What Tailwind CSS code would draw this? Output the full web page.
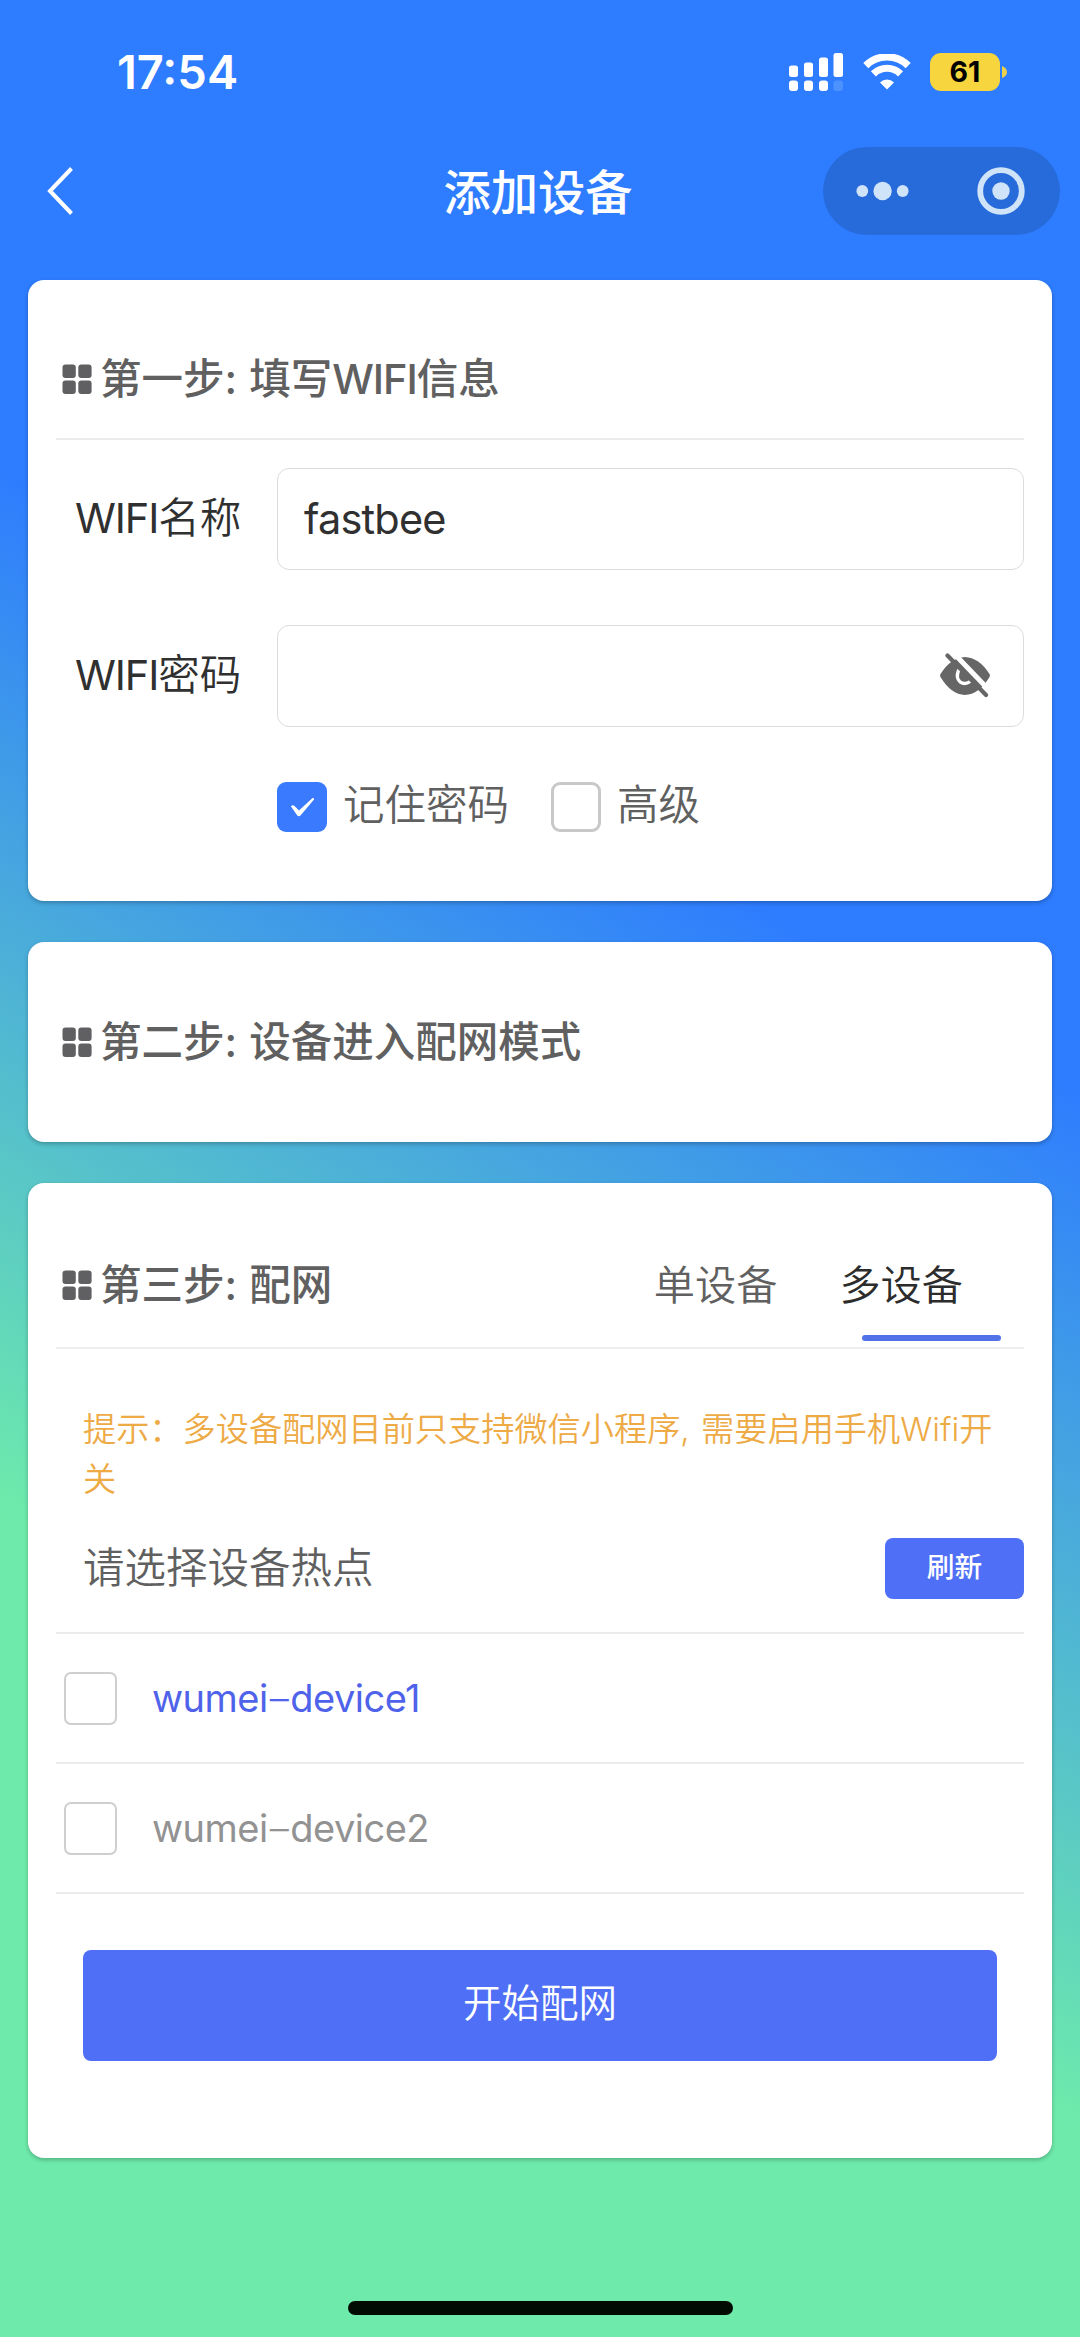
<!DOCTYPE html>
<html lang="zh-CN">
<head>
<meta charset="utf-8">
<meta name="viewport" content="width=1080">
<title>添加设备</title>
<script src="https://cdn.jsdelivr.net/npm/@tailwindcss/browser@4"></script>
</head>
<body class="font-['Inter','Noto_Sans_CJK_SC',sans-serif]">
<div class="flex h-[2337px] w-[1080px] flex-col overflow-hidden bg-[linear-gradient(210deg,#2e7cff_36.8%,#6eebab_72%)] text-[41.5px] text-[#606060]">

  <!-- Status bar -->
  <header class="flex h-[144px] shrink-0 items-center justify-between pr-[73px] pl-[117px] text-white">
    <div class="text-[47px] leading-[60px] font-semibold">17:54</div>
    <div class="flex items-center">
      <svg class="h-[38px] w-[56px]" viewBox="0 0 56 38" fill="#fff">
        <rect x="1" y="12.500" width="9" height="11.500" rx="2.500"/><rect x="16" y="9.500" width="9" height="14.500" rx="2.500"/><rect x="31" y="4.500" width="9" height="19.500" rx="2.500"/><rect x="45.500" y="0" width="9.500" height="24" rx="2.500"/>
        <rect x="1" y="27.500" width="9" height="10.500" rx="3"/><rect x="16" y="27.500" width="9" height="10.500" rx="3"/><rect x="31" y="27.500" width="9" height="10.500" rx="3"/><rect x="45.500" y="27.500" width="9.500" height="10.500" rx="3" fill="#4c92ff"/>
      </svg>
      <svg class="ml-[19px] h-[36px] w-[48px]" viewBox="0 0 48 36" fill="none" stroke="#fff" stroke-width="7.200">
        <path d="M2.800 11.600 A30 30 0 0 1 45.200 11.600"/>
        <path d="M10.400 19.800 A19.500 19.500 0 0 1 37.600 19.800"/>
        <path d="M24 35.500 L17 28.400 A10 10 0 0 1 31 28.400 Z" fill="#fff" stroke="none"/>
      </svg>
      <div class="ml-[19px] flex h-[38px] w-[70px] items-center justify-center rounded-[11px] bg-[#f7d53e] text-[28.5px] leading-[38px] font-bold text-black">61</div>
      <svg class="ml-[2px] h-[12px] w-[5px]" viewBox="0 0 5 12"><path d="M0 0 Q5 2 5 6 Q5 10 0 12Z" fill="#e9d04f"/></svg>
    </div>
  </header>

  <!-- Navigation bar -->
  <nav class="grid h-[94px] shrink-0 grid-cols-[1fr_auto_1fr] items-center px-5">
    <svg class="ml-[26px] h-[50px] w-[30px]" viewBox="0 0 30 50" fill="none" stroke="#fff" stroke-width="4"><path d="M25.500 2.500 L4 25 L25.500 47.500"/></svg>
    <h1 class="-translate-x-[2px] pt-[4px] text-[47.3px] leading-[60px] font-medium text-white">添加设备</h1>
    <div class="flex h-[88px] w-[237px] items-center justify-between justify-self-end rounded-full bg-[#276bdb] pr-[35px] pl-[33px]">
      <svg class="h-[20px] w-[53px]" viewBox="0 0 53 20" fill="#cfe3f9"><circle cx="6.300" cy="10" r="5.900"/><circle cx="26.600" cy="10" r="9.200"/><circle cx="46.700" cy="10" r="5.900"/></svg>
      <svg class="h-[48px] w-[48px]" viewBox="0 0 48 48"><circle cx="24" cy="24" r="20.800" fill="none" stroke="#cfe3f9" stroke-width="5.800"/><circle cx="24" cy="24" r="8.700" fill="#cfe3f9"/></svg>
    </div>
  </nav>

  <main class="mt-[42px] flex flex-col gap-[41px] px-[28px]">

    <!-- Step 1 -->
    <section class="h-[621px] rounded-[16px] bg-white px-[28px] shadow-[0_2px_4px_rgba(0,0,0,0.25)]">
      <div class="flex h-[160px] items-center border-b-2 border-[#ebebeb] pt-[40px] pl-[6px]">
        <svg class="h-[30px] w-[30px]" viewBox="0 0 30 30" fill="#606063"><rect x="0.500" y="0.500" width="13.300" height="13.500" rx="3"/><rect x="16.300" y="0.500" width="13.300" height="13.500" rx="3"/><rect x="0.500" y="16.500" width="13.300" height="13.500" rx="3"/><rect x="16.300" y="16.500" width="13.300" height="13.500" rx="3"/></svg>
        <h2 class="ml-[8px] leading-[60px] font-medium whitespace-pre [word-spacing:1px]">第一步: 填写<span class="tracking-[-1px]">WIFI</span>信息</h2>
      </div>
      <div class="mt-[28px] flex h-[102px] items-center">
        <label class="w-[221px] pb-[2px] pl-[19px] leading-[60px] font-[350] text-[#303030]"><span class="font-normal tracking-[-1.1px]">WIFI</span>名称</label>
        <div class="flex h-full flex-1 items-center rounded-[12px] border border-[#dcdcdc] pl-[26px] leading-[60px] tracking-[-0.8px] text-[#303030]">fastbee</div>
      </div>
      <div class="mt-[55px] flex h-[102px] items-center">
        <label class="w-[221px] pb-[2px] pl-[19px] leading-[60px] font-[350] text-[#303030]"><span class="font-normal tracking-[-1.1px]">WIFI</span>密码</label>
        <div class="flex h-full flex-1 items-center justify-end rounded-[12px] border border-[#dcdcdc] pr-[31px]">
          <svg class="h-[46px] w-[54px]" viewBox="0 0 54 46">
            <path d="M2.500 24 Q1.500 22.500 2.500 21 Q13 4.500 27 4 Q41 4.500 51.500 21 Q52.500 22.500 51.500 24 Q41 41.500 27 42 Q13 41.500 2.500 24Z" fill="#666"/>
            <path d="M20.500 17.500 Q17.500 25 22 28.800 Q27 32.300 32 28.500" fill="none" stroke="#fff" stroke-width="3.400" stroke-linecap="round"/>
            <path d="M14 -1.500 L53 39" stroke="#fff" stroke-width="5"/>
            <path d="M9.500 2.500 L48 42" stroke="#666" stroke-width="4.200" stroke-linecap="round"/>
          </svg>
        </div>
      </div>
      <div class="mt-[55px] flex h-[50px] items-center pl-[221px] font-[350]">
        <span class="flex size-[50px] items-center justify-center rounded-[9px] bg-[#3a7afe]">
          <svg class="h-[20px] w-[25px]" viewBox="0 0 25 20" fill="#fff"><path d="M1 9.500 Q2.500 7.500 4.500 9 L9 13.500 L22.500 1 Q24.500 0.500 24 2.500 L10.500 18.500 Q8.700 20 7.300 18.500Z"/></svg>
        </span>
        <span class="ml-[16px] -translate-y-[2px] leading-[50px]">记住密码</span>
        <span class="ml-[42px] size-[50px] rounded-[9px] border-3 border-[#c8c8c8]"></span>
        <span class="ml-[16px] -translate-y-[2px] leading-[50px]">高级</span>
      </div>
    </section>

    <!-- Step 2 -->
    <section class="flex h-[200px] items-center rounded-[16px] bg-white px-[34px] shadow-[0_2px_4px_rgba(0,0,0,0.25)]">
      <svg class="h-[30px] w-[30px]" viewBox="0 0 30 30" fill="#606063"><rect x="0.500" y="0.500" width="13.300" height="13.500" rx="3"/><rect x="16.300" y="0.500" width="13.300" height="13.500" rx="3"/><rect x="0.500" y="16.500" width="13.300" height="13.500" rx="3"/><rect x="16.300" y="16.500" width="13.300" height="13.500" rx="3"/></svg>
      <h2 class="ml-[8px] leading-[60px] font-medium whitespace-pre [word-spacing:1px]">第二步: 设备进入配网模式</h2>
    </section>

    <!-- Step 3 -->
    <section class="h-[975px] rounded-[16px] bg-white px-[28px] shadow-[0_2px_4px_rgba(0,0,0,0.25)]">
      <div class="relative flex h-[166px] items-center border-b-2 border-[#efefef] pt-[40px] pl-[6px]">
        <svg class="h-[30px] w-[30px]" viewBox="0 0 30 30" fill="#606063"><rect x="0.500" y="0.500" width="13.300" height="13.500" rx="3"/><rect x="16.300" y="0.500" width="13.300" height="13.500" rx="3"/><rect x="0.500" y="16.500" width="13.300" height="13.500" rx="3"/><rect x="16.300" y="16.500" width="13.300" height="13.500" rx="3"/></svg>
        <h2 class="ml-[8px] leading-[60px] font-medium whitespace-pre [word-spacing:1px]">第三步: 配网</h2>
        <div class="mr-[61px] ml-auto flex gap-[62px] text-[41.2px] leading-[60px] font-[350]">
          <span>单设备</span>
          <span class="text-[#2c2c2c]">多设备</span>
        </div>
        <i class="absolute right-[23px] bottom-[6px] h-[6px] w-[139px] rounded-full bg-[#5272e8]"></i>
      </div>
      <p class="mt-[55px] px-[27px] text-[33.2px] leading-[50px] font-[350] whitespace-nowrap text-[#edaa45] [word-spacing:2px]">提示：多设备配网目前只支持微信小程序, 需要启用手机Wifi开<br>关</p>
      <div class="mt-[34px] flex h-[61px] items-center justify-between pl-[27px]">
        <span class="pb-[2px] leading-[60px] font-[350]">请选择设备热点</span>
        <button class="h-[61px] w-[139px] rounded-[8px] bg-[#4f6ff6] pb-[3px] text-[27.7px] leading-[58px] font-medium text-white">刷新</button>
      </div>
      <ul class="mt-[33px] border-t-2 border-[#ebebee] text-[38px] tracking-[-0.5px]">
        <li class="flex h-[130px] items-center border-b-2 border-[#ebebee] pl-[8px]">
          <span class="size-[53px] rounded-[7px] border-2 border-[#cfcfcf]"></span>
          <span class="ml-[35px] text-[#4e62ea]">wumei<span class="px-[2px] font-light">–</span>device1</span>
        </li>
        <li class="flex h-[130px] items-center border-b-2 border-[#ebebee] pl-[8px]">
          <span class="size-[53px] rounded-[7px] border-2 border-[#cfcfcf]"></span>
          <span class="ml-[35px] text-[#929292]">wumei<span class="px-[2px] font-light">–</span>device2</span>
        </li>
      </ul>
      <button class="mt-[56px] ml-[27px] h-[111px] w-[914px] rounded-[8px] bg-[#4f6ff6] pb-[3px] text-[38.5px] font-[350] text-white">开始配网</button>
    </section>
  </main>

  <!-- Home indicator -->
  <div class="mt-auto mb-[22px] h-[14px] w-[385px] shrink-0 self-center rounded-full bg-[#020a04]"></div>
</div>
</body>
</html>
